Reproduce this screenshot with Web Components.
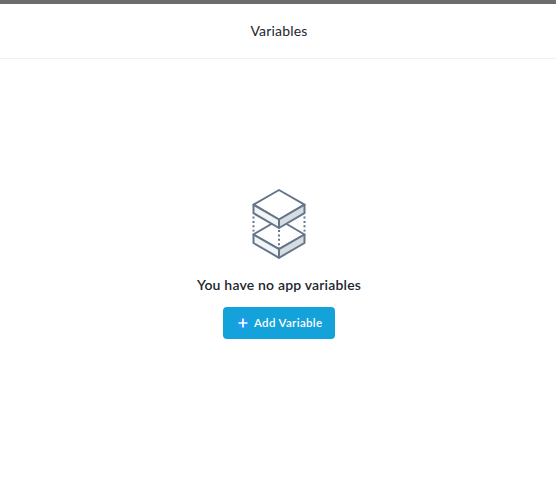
<!DOCTYPE html>
<html lang="en">
<head>
<meta charset="utf-8">
<title>Variables</title>
<style>
html, body { margin: 0; height: 100%; background: #fff; }
body { font-family: Lato, "Open Sans", sans-serif; color: #20262e; overflow: hidden; }
</style>
</head>
<body>
<variables-panel>
  <panel-header slot="header">Variables</panel-header>
  <empty-state>
    <layers-icon slot="icon"></layers-icon>
    You have no app variables
    <add-button slot="action">Add Variable</add-button>
  </empty-state>
</variables-panel>
<script>
const define = (name, html) => customElements.define(name, class extends HTMLElement {
  constructor() {
    super();
    this.attachShadow({ mode: "open" }).innerHTML = html;
  }
});

define("variables-panel", `
<style>
:host { display: flex; flex-direction: column; height: 478px; box-sizing: border-box; background: #fff; border-top: 4px solid #6c6c6c; }
</style>
<slot name="header"></slot><slot></slot>`);

define("panel-header", `
<style>
:host { display: flex; align-items: center; justify-content: center; height: 54px; padding-left: 2px; border-bottom: 1px solid #f1f1f1; font-size: 14px; line-height: 20px; letter-spacing: 0.2px; }
</style>
<slot></slot>`);

define("empty-state", `
<style>
:host { display: flex; flex-direction: column; align-items: center; padding: 129px 0 0 2px; }
.message { margin: 16px 0 13px; font-size: 14px; font-weight: 600; line-height: 18px; letter-spacing: 0.19px; white-space: nowrap; }
</style>
<slot name="icon"></slot><div class="message"><slot></slot></div><slot name="action"></slot>`);

define("layers-icon", `
<style>
:host { display: block; width: 56px; height: 72px; }
svg { display: block; }
</style>
<svg width="56" height="72" viewBox="0 0 56 72" fill="none" stroke="#65758a" stroke-width="2" stroke-linejoin="round">
  <path d="M2.5 46.5 28 31.5 53.5 46.5 28 61.2Z" fill="#fff"/>
  <path d="M2.5 46.5 28 61.2V69.8L2.5 55Z" fill="#f2f5f8"/>
  <path d="M53.5 46.5 28 61.2V69.8L53.5 55Z" fill="#d6dce2"/>
  <path d="M2.5 16.7 28 2 53.5 16.7 28 31.5Z" fill="#fff"/>
  <path d="M2.5 16.7 28 31.5V40L2.5 25.2Z" fill="#f2f5f8"/>
  <path d="M53.5 16.7 28 31.5V40L53.5 25.2Z" fill="#d6dce2"/>
  <path d="M2.5 28.5v15M28 42v18M53.5 28.5v15" stroke-dasharray="2 2.4" stroke-linejoin="miter"/>
</svg>`);

define("add-button", `
<style>
:host { display: block; }
button { display: flex; align-items: center; gap: 5px; width: 112px; height: 32px; margin: 0; padding: 0 0 0 14px; border: 0; border-radius: 4px; background: #14a2db; color: #fff; font: 600 11.5px/16px Lato, "Open Sans", sans-serif; letter-spacing: 0.35px; white-space: nowrap; }
svg { flex: none; }
</style>
<button type="button"><svg width="12" height="12" viewBox="0 0 12 12"><circle cx="6" cy="6" r="6" fill="#2199f8"/><path d="M6 1.5v9M1.5 6h9" stroke="#fff" stroke-width="1.7"/></svg><span><slot></slot></span></button>`);
</script>
</body>
</html>
